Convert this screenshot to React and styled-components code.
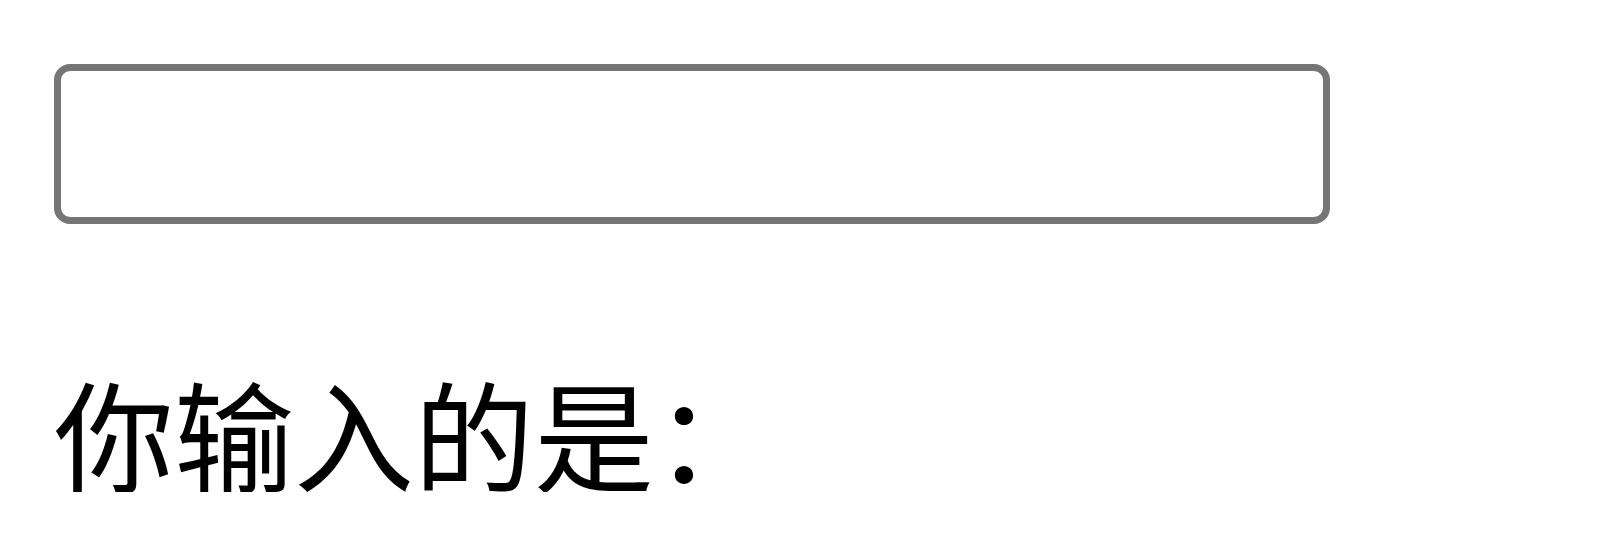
import React, { useState } from 'react'
import styled, { createGlobalStyle } from 'styled-components';

const GlobalStyle = createGlobalStyle`
  html, body {
    margin: 0;
    padding: 0;
    background: #ffffff;
  }
`;

const Page = styled.main`
  display: flex;
  flex-direction: column;
  align-items: flex-start;
  padding: 64px 0 0 54px;
  font-family: "Noto Sans CJK SC", "Noto Sans", sans-serif;
`;

const TextInput = styled.input`
  box-sizing: border-box;
  width: 1276px;
  height: 160px;
  border: 7px solid #767676;
  border-radius: 16px;
  padding: 0 20px;
  font-family: inherit;
  font-size: 80px;
  color: #000;
  background: #fff;
  outline: none;
`;

const Echo = styled.p`
  margin: 148px 0 0 0;
  font-size: 120px;
  line-height: 1;
  color: #000;
`;

const App = () => {
  const [value, setValue] = useState('');

  return (
    <Page>
      <GlobalStyle />
      <TextInput value={value} onChange={(e) => setValue(e.target.value)} />
      <Echo>你输入的是：{value}</Echo>
    </Page>
  );
};

export default App;
